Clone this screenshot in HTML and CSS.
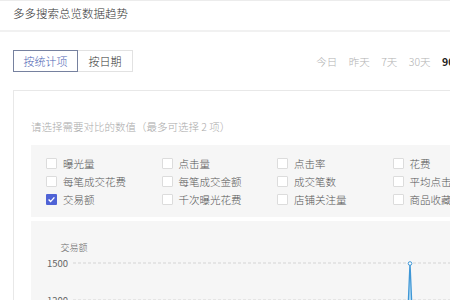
FILE: index.html
```
<!DOCTYPE html>
<html lang="zh-CN">
<head>
<meta charset="utf-8">
<link rel="stylesheet" href="styles.css">
</head>
<body>
<div class="page">
  <header class="header">
    <h1 class="title">多多搜索总览数据趋势</h1>
  </header>
  <div class="toolbar">
    <div class="tabs">
      <button class="tab tab-active">按统计项</button>
      <button class="tab tab-date">按日期</button>
    </div>
    <div class="periods">
      <span class="period">今日</span>
      <span class="period">昨天</span>
      <span class="period">7天</span>
      <span class="period">30天</span>
      <span class="period period-active">90天</span>
    </div>
  </div>
  <section class="panel">
    <p class="hint">请选择需要对比的数值（最多可选择 2 项）</p>
    <div class="metrics">
      <label class="metric"><span class="box"></span>曝光量</label>
      <label class="metric"><span class="box"></span>点击量</label>
      <label class="metric"><span class="box"></span>点击率</label>
      <label class="metric"><span class="box"></span>花费</label>
      <label class="metric"><span class="box"></span>每笔成交花费</label>
      <label class="metric"><span class="box"></span>每笔成交金额</label>
      <label class="metric"><span class="box"></span>成交笔数</label>
      <label class="metric"><span class="box"></span>平均点击花费</label>
      <label class="metric"><span class="box box-checked"><svg viewBox="0 0 11 11" width="11" height="11"><path d="M2.6 5.6 L4.6 7.6 L8.4 3.4" fill="none" stroke="#fff" stroke-width="1.4"/></svg></span>交易额</label>
      <label class="metric"><span class="box"></span>千次曝光花费</label>
      <label class="metric"><span class="box"></span>店铺关注量</label>
      <label class="metric"><span class="box"></span>商品收藏量</label>
    </div>
    <div class="chart">
      <svg class="chart-svg" width="460" height="100" viewBox="0 0 460 100">
        <text x="43" y="30" class="axis-name" text-anchor="middle">交易额</text>
        <text x="37" y="45.5" class="tick" text-anchor="end">1500</text>
        <text x="37" y="82.5" class="tick" text-anchor="end">1200</text>
        <line x1="42" y1="42" x2="460" y2="42" class="grid"/>
        <line x1="42" y1="79" x2="460" y2="79" class="grid"/>
        <polygon points="376.5,100 379,42 381.5,100" fill="#b9dff5"/>
        <polyline points="376.5,100 379,42 381.5,100" fill="none" stroke="#3f97d6" stroke-width="1.3"/>
        <circle cx="379" cy="42.5" r="1.8" fill="#fff" stroke="#3f97d6" stroke-width="1"/>
      </svg>
    </div>
  </section>
</div>
</body>
</html>
```
FILE: styles.css
```
html, body {
  margin: 0;
  padding: 0;
  background: #fff;
  overflow: hidden;
}
body {
  font-family: "Noto Sans CJK SC", "Noto Sans", sans-serif;
  color: #333;
}
.page {
  width: 490px;
}
.header {
  height: 29px;
  border-top: 1px solid #ececec;
  border-bottom: 2px solid #f1f1f1;
  padding-left: 13px;
}
.title {
  margin: 0;
  font-size: 11.5px;
  font-weight: 300;
  line-height: 24px;
  color: #333;
}
.toolbar {
  height: 58px;
  display: flex;
  align-items: center;
  padding: 0 25px 0 13px;
}
.tabs {
  display: flex;
}
.tab {
  height: 22px;
  margin: 0;
  padding: 0;
  font-family: inherit;
  font-size: 11px;
  font-weight: 300;
  line-height: 20px;
  text-align: center;
  background: #fff;
  border: 1px solid #e2e2e2;
  color: #333;
}
.tab-active {
  width: 65px;
  border-color: #76819f;
  color: #4d64b4;
}
.tab-date {
  width: 55px;
  border-left: none;
}
.periods {
  margin-left: auto;
  display: flex;
  gap: 11.5px;
  font-size: 10.5px;
  font-weight: 300;
  color: #b2b2b2;
}
.period-active {
  color: #222;
  font-weight: bold;
}
.panel {
  margin-left: 13px;
  border-top: 1px solid #e8e8e8;
  border-left: 1px solid #e8e8e8;
  padding: 28px 0 0 17px;
}
.hint {
  margin: 0;
  font-size: 10.5px;
  font-weight: 300;
  line-height: 16px;
  color: #aaa;
}
.metrics {
  margin-top: 10px;
  background: #f6f6f6;
  padding: 9px 0 9px 15px;
  display: grid;
  grid-template-columns: repeat(4, 115.5px);
}
.metric {
  display: flex;
  align-items: center;
  height: 18px;
  font-size: 10.5px;
  font-weight: 300;
  color: #555;
}
.box {
  width: 9px;
  height: 9px;
  border: 1px solid #dcdcdc;
  background: #fff;
  margin-right: 6px;
  display: flex;
  border-radius: 1px;
}
.box-checked {
  width: 11px;
  height: 11px;
  border: none;
  background: #4f63d6;
}
.chart {
  margin-top: 4px;
  height: 100px;
  background: #f6f6f6;
}
.chart-svg {
  display: block;
  font-family: "Noto Sans CJK SC", "Noto Sans", sans-serif;
}
.axis-name {
  font-size: 9px;
  font-weight: 300;
  fill: #666;
}
.tick {
  font-size: 9.5px;
  fill: #666;
}
.grid {
  stroke: #d4d4d4;
  stroke-width: 1;
  stroke-dasharray: 3 2;
}
```
